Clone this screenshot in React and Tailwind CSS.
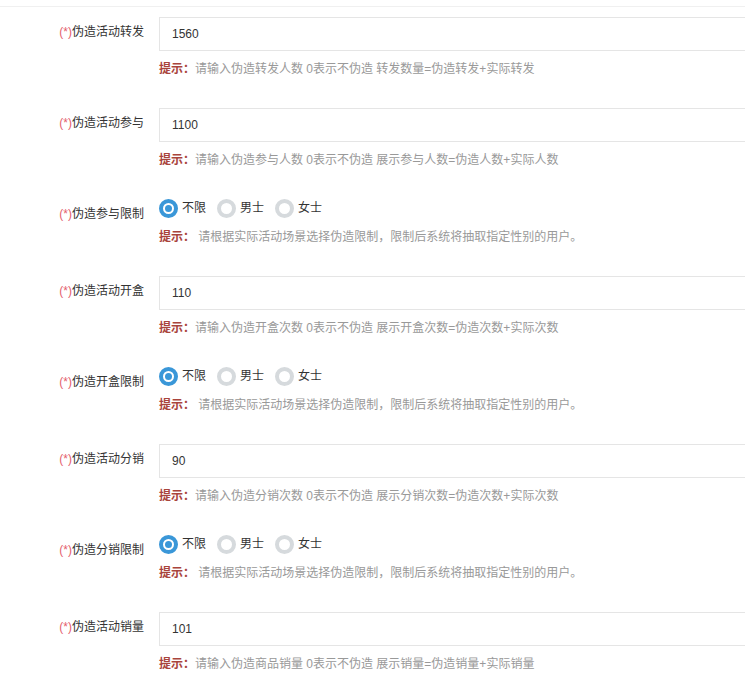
import React from 'react';

const rows = [
    { label: '伪造活动转发', type: 'input', value: '1560', hint: '请输入伪造转发人数 0表示不伪造 转发数量=伪造转发+实际转发' },
    { label: '伪造活动参与', type: 'input', value: '1100', hint: '请输入伪造参与人数 0表示不伪造 展示参与人数=伪造人数+实际人数' },
    { label: '伪造参与限制', type: 'radio', hint: '请根据实际活动场景选择伪造限制，限制后系统将抽取指定性别的用户。' },
    { label: '伪造活动开盒', type: 'input', value: '110', hint: '请输入伪造开盒次数 0表示不伪造 展示开盒次数=伪造次数+实际次数' },
    { label: '伪造开盒限制', type: 'radio', hint: '请根据实际活动场景选择伪造限制，限制后系统将抽取指定性别的用户。' },
    { label: '伪造活动分销', type: 'input', value: '90', hint: '请输入伪造分销次数 0表示不伪造 展示分销次数=伪造次数+实际次数' },
    { label: '伪造分销限制', type: 'radio', hint: '请根据实际活动场景选择伪造限制，限制后系统将抽取指定性别的用户。' },
    { label: '伪造活动销量', type: 'input', value: '101', hint: '请输入伪造商品销量 0表示不伪造 展示销量=伪造销量+实际销量' },
];

function Radio({ checked, text }) {
    return (
        <label className="flex items-center gap-1">
            {checked ? (
                <span className="flex h-[19px] w-[19px] items-center justify-center rounded-full border-4 border-[#3a97d8] bg-white">
                    <span className="h-[7px] w-[7px] rounded-full bg-[#3a97d8]" />
                </span>
            ) : (
                <span className="h-[19px] w-[19px] rounded-full border-4 border-[#d6dadd] bg-white" />
            )}
            <span className="text-[12px] leading-[18px] text-[#333]">{text}</span>
        </label>
    );
}

export default function App() {
    return (
        <div
            className="h-[684px] w-[745px] overflow-hidden bg-white"
            style={{ fontFamily: '"Liberation Sans", "Noto Sans CJK SC", sans-serif' }}
        >
            <div className="mt-[6px] border-t border-[#f0f0f0] pt-[10px]">
                {rows.map((row, i) => (
                    <div key={i} className="mb-[29px] flex">
                        <div className="w-[144px] shrink-0 pt-[5px] text-right text-[12px] leading-5 text-[#333]">
                            <span className="text-[#e4606d]">(*)</span>
                            {row.label}
                        </div>
                        <div className="ml-[15px] shrink-0">
                            {row.type === 'input' ? (
                                <div className="flex h-[34px] w-[620px] items-center border border-[#e5e5e5] px-3 text-[12px] text-[#333]">
                                    {row.value}
                                </div>
                            ) : (
                                <div className="flex h-[18px] items-center gap-[11px]">
                                    <Radio checked text="不限" />
                                    <Radio text="男士" />
                                    <Radio text="女士" />
                                </div>
                            )}
                            <div
                                className={
                                    (row.type === 'input' ? 'mt-2' : 'mt-[10px]') +
                                    ' text-[12px] leading-5 text-[#999]'
                                }
                            >
                                <span className="font-bold text-[#a9443c]">
                                    {row.type === 'input' ? '提示：' : '提示： '}
                                </span>
                                {row.hint}
                            </div>
                        </div>
                    </div>
                ))}
            </div>
        </div>
    );
}
